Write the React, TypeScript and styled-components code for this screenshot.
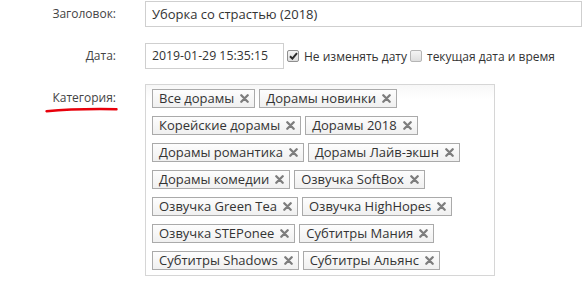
import React from "react";
import styled, { createGlobalStyle } from "styled-components";

const GlobalStyle = createGlobalStyle`
  html, body {
    margin: 0;
    padding: 0;
    background: #fff;
  }
  body {
    font-family: "Open Sans", "Liberation Sans", sans-serif;
    font-size: 13px;
    color: #333;
  }
`;

const Form = styled.div`
  display: flex;
  flex-direction: column;
  padding: 1px 2px 0 0;
`;

const Row = styled.div<{ $top?: number }>`
  display: grid;
  grid-template-columns: 116px 1fr;
  column-gap: 29px;
  align-items: start;
  margin-top: ${(p) => p.$top || 0}px;
`;

const Label = styled.div<{ $pad?: number }>`
  position: relative;
  text-align: right;
  color: #444;
  font-size: 12px;
  line-height: 26px;
  padding-top: ${(p) => p.$pad || 0}px;
`;

const Underline = styled.svg`
  position: absolute;
  left: 45px;
  top: 23px;
`;

const TextInput = styled.div<{ $width?: number; $small?: boolean }>`
  box-sizing: border-box;
  height: 26px;
  width: ${(p) => (p.$width ? `${p.$width}px` : "100%")};
  border: 1px solid #cfcfcf;
  padding: 0 6px;
  line-height: 24px;
  font-size: ${(p) => (p.$small ? "12.3px" : "13px")};
  color: #333;
  background: #fff;
  white-space: nowrap;
`;

const DateLine = styled.div`
  display: flex;
  align-items: center;
  height: 26px;
`;

const CheckOption = styled.label`
  display: flex;
  align-items: center;
  margin-left: 3px;
  font-size: 12px;
  color: #333;
  white-space: nowrap;
`;

const Box = styled.span<{ $checked?: boolean }>`
  box-sizing: border-box;
  width: 12px;
  height: 12px;
  margin-right: 5px;
  border: 1px solid ${(p) => (p.$checked ? "#8f8f8f" : "#b5b5b5")};
  border-radius: 2px;
  background: linear-gradient(#f4f4f4, #dedede);
  display: flex;
  align-items: center;
  justify-content: center;
`;

const TagBox = styled.div`
  box-sizing: border-box;
  width: 350px;
  height: 192px;
  padding: 4px 6px 5px;
  border: 1px solid #d6d6d6;
  background: linear-gradient(#f7f7f7, #fff 14px);
  display: flex;
  flex-wrap: wrap;
  align-content: flex-start;
  column-gap: 4px;
  row-gap: 8px;
`;

const Tag = styled.span`
  box-sizing: border-box;
  height: 19px;
  display: inline-flex;
  align-items: center;
  padding: 0 5px 0 6px;
  border: 1px solid #aaa;
  background: linear-gradient(#fdfdfd, #f0f0f0);
  color: #333;
  line-height: 17px;
  white-space: nowrap;
`;

const Remove = styled.svg`
  margin-left: 6px;
  flex: none;
`;

const CrossIcon = () => (
  <Remove width="9" height="9" viewBox="0 0 9 9">
    <path d="M1.3 1.3 L7.7 7.7 M7.7 1.3 L1.3 7.7" stroke="#7d7d7d" strokeWidth="2.3" strokeLinecap="round" />
  </Remove>
);

const tags = [
  "Все дорамы",
  "Дорамы новинки",
  "Корейские дорамы",
  "Дорамы 2018",
  "Дорамы романтика",
  "Дорамы Лайв-экшн",
  "Дорамы комедии",
  "Озвучка SoftBox",
  "Озвучка Green Tea",
  "Озвучка HighHopes",
  "Озвучка STEPonee",
  "Субтитры Мания",
  "Субтитры Shadows",
  "Субтитры Альянс",
];

const App = () => {
  return (
    <>
      <GlobalStyle />
      <Form>
        <Row>
          <Label>Заголовок:</Label>
          <TextInput>Уборка со страстью (2018)</TextInput>
        </Row>
        <Row $top={16}>
          <Label>Дата:</Label>
          <DateLine>
            <TextInput $width={139} $small>2019-01-29 15:35:15</TextInput>
            <CheckOption>
              <Box $checked>
                <svg width="9" height="8" viewBox="0 0 9 8">
                  <path d="M1 4.2 L3.4 6.6 L8 1.2" stroke="#2b2b2b" strokeWidth="2" fill="none" />
                </svg>
              </Box>
              Не изменять дату
            </CheckOption>
            <CheckOption>
              <Box />
              текущая дата и время
            </CheckOption>
          </DateLine>
        </Row>
        <Row $top={15}>
          <Label $pad={1}>
            Категория:
            <Underline width="74" height="6" viewBox="0 0 74 6">
              <path d="M1.5 4.2 Q30 1.5 71.5 2.2" stroke="#e8000b" strokeWidth="2.4" fill="none" strokeLinecap="round" />
            </Underline>
          </Label>
          <TagBox>
            {tags.map((t) => (
              <Tag key={t}>
                {t}
                <CrossIcon />
              </Tag>
            ))}
          </TagBox>
        </Row>
      </Form>
    </>
  );
};

export default App;
